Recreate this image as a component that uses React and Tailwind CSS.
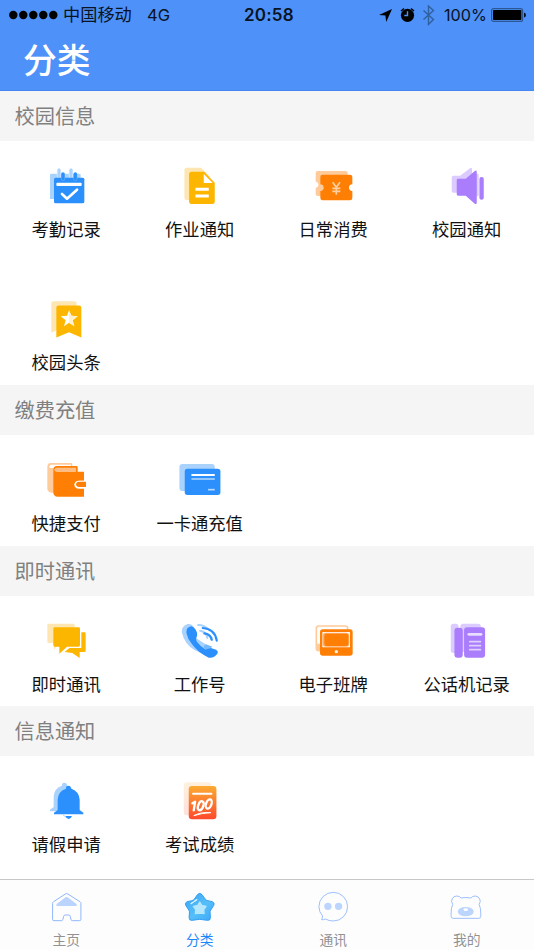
import React from "react";

const BLUE = "#2b90fb";
const LIGHT_BLUE = "#a9d2fd";
const YELLOW = "#fdb600";
const LIGHT_YELLOW = "#fee6b3";
const ORANGE = "#ff7f04";
const LIGHT_ORANGE = "#ffcb9b";
const PURPLE = "#a97dfc";
const LIGHT_PURPLE = "#dccbfe";

function Icon({ box, children }) {
  return (
    <svg viewBox={box} className="h-12 w-12 shrink-0" fill="none">
      {children}
    </svg>
  );
}

const AttendanceIcon = () => (
  <Icon box="128 39 144 144">
    <path d="M153 71h84q4 0 4 4v72h-92V75q0-4 4-4z" fill={LIGHT_BLUE} />
    <path d="M176 61v16M212 61v16" stroke="#e4f1fe" strokeWidth="13" strokeLinecap="round" />
    <path d="M176 60v19M212 60v19" stroke={LIGHT_BLUE} strokeWidth="9" strokeLinecap="round" />
    <rect x="161" y="83" width="91" height="77" rx="5" fill={BLUE} />
    <path d="M188 73v14M225 73v14" stroke="#6fb3fb" strokeWidth="12" strokeLinecap="round" />
    <path d="M188 72v15M225 72v15" stroke={BLUE} strokeWidth="9" strokeLinecap="round" />
    <rect x="168" y="98" width="76" height="10" rx="3" fill="#fff" />
    <path d="M185 132l15 14 30-27" stroke="#fff" strokeWidth="8" strokeLinecap="round" strokeLinejoin="round" />
  </Icon>
);

const HomeworkIcon = () => (
  <Icon box="528.75 39 144 144">
    <path d="M560 53h44l26 26v71h-70q-6 0-6-6V59q0-6 6-6z" fill={LIGHT_YELLOW} />
    <path d="M575 65h38l32 33v57q0 7-7 7h-63q-7 0-7-7V72q0-7 7-7z" fill={YELLOW} />
    <path d="M612 72v27h27z" fill="#fff" />
    <path d="M587 118h40M587 138h40" stroke="#fff" strokeWidth="9" />
  </Icon>
);

const SpendingIcon = () => (
  <Icon box="128 39 144 144">
    <path d="M151 63h84q6 0 6 6v69h-90q-6 0-6-6v-19q8-1 8-9t-8-9V69q0-6 6-6z" fill={LIGHT_ORANGE} />
    <path d="M166 74h82q7 0 7 7v22q-10 1-10 10t10 10v21q0 7-7 7h-82q-7 0-7-7v-21q10-1 10-10t-10-10V81q0-7 7-7z" fill={ORANGE} />
    <path d="M196 97l11 15 11-15M207 112v22M195 115h24M195 124h24" stroke="#ffcf9f" strokeWidth="5" />
  </Icon>
);

const SpeakerIcon = () => (
  <Icon box="528.75 39 144 144">
    <path d="M560 77h20l31-23q5-2 5 4v78l-36-8h-20q-5 0-5-5V82q0-5 5-5z" fill={LIGHT_PURPLE} />
    <rect x="626" y="71" width="10" height="68" rx="4" fill={LIGHT_PURPLE} />
    <path d="M574 86h23l27-23q6-4 6 3v92q0 6-6 3l-27-24h-23q-4 0-4-4V90q0-4 4-4z" fill={PURPLE} />
    <rect x="638" y="81" width="13" height="68" rx="6" fill={PURPLE} />
  </Icon>
);

const HeadlineIcon = () => (
  <Icon box="128 19.5 144 144">
    <path d="M160 35h62q7 0 7 7v80l-38-10-38 18V42q0-7 7-7z" fill={LIGHT_YELLOW} />
    <path d="M176 48h60q7 0 7 7v89l-37-16-38 16V55q0-7 8-7z" fill={YELLOW} />
    <path d="M206 62l7 17 19 1-15 12 5 18-16-10-15 10 5-18-15-12 19-1z" fill="#fff" />
    <path d="M206 62l7 17 19 1-15 12 5 18-16-10z" fill="#fff1cc" />
  </Icon>
);

const WalletIcon = () => (
  <Icon box="128 21 144 144">
    <path d="M151 39h61q4 0 4 4v85h-63q-12-1-12-13V50q0-10 10-11z" fill={LIGHT_ORANGE} />
    <path d="M148 54q-3-9 6-10h58v10z" fill="#fff" />
    <path d="M170 48h58q4 0 4 4v13h19v27h-15q-13 1-14 12 1 11 14 12h15v24h-79q-12-1-13-12V59q0-10 11-11z" fill={ORANGE} />
    <path d="M170 66q-8-1-8-7t8-6h57v13z" fill="#ffbd82" />
    <path d="M258 92h-22q-12 1-13 11 1 10 13 11h22z" fill="#fff" />
    <path d="M257 95h-21q-9 1-9 8t9 8h21z" fill={ORANGE} />
  </Icon>
);

const CardIcon = () => (
  <Icon box="528.75 21 144 144">
    <rect x="539" y="42" width="106" height="81" rx="9" fill={LIGHT_BLUE} />
    <rect x="555" y="56" width="107" height="79" rx="8" fill={BLUE} />
    <path d="M575 75h70" stroke="#fff" strokeWidth="6" />
    <path d="M575 87h70" stroke="#a9d2fd" strokeWidth="5" />
    <path d="M625 119h20" stroke="#b9dafd" strokeWidth="5" />
  </Icon>
);

const ChatIcon = () => (
  <Icon box="128 24 144 144">
    <path d="M145 41h74q4 0 4 4v54h-46l-16 20V99h-16q-4 0-4-4V45q0-4 4-4z" fill={LIGHT_YELLOW} />
    <path d="M243 67h9q4 0 4 4v51q0 4-4 4h-14v18l-22-15-23-3 14-12h36z" fill={YELLOW} />
    <path d="M163 52h72q4 0 4 4v49q0 5-4 5h-35l-23 21v-21h-14q-4 0-4-5V56q0-4 4-4z" fill={YELLOW} />
  </Icon>
);

const PhoneIcon = () => (
  <Icon box="528.75 24 144 144">
    <path d="M564 42q-19 6-18 24 8 36 38 54l24 11 14-25-30-20-15-15 7-17q-8-14-20-12z" fill={LIGHT_BLUE} />
    <path d="M595 45q20 0 34 16" stroke={LIGHT_BLUE} strokeWidth="6" strokeLinecap="round" />
    <path d="M601 62q18 2 22 22" stroke={LIGHT_BLUE} strokeWidth="6" strokeLinecap="round" />
    <path d="M575 49q-17 2-15 20 3 17 17 34 20 27 50 40 18 2 27-14 2-6-5-10l-18-6q-7-2-15 5-14-9-24-22-6-9 0-18 1-12-4-19-5-8-13-10z" fill={BLUE} />
    <path d="M611 109l8-6 19 7-6 5-16 4z" fill="#75b8fb" />
    <path d="M609 54q37 3 42 38" stroke={BLUE} strokeWidth="6.5" strokeLinecap="round" />
    <path d="M614 70q18 2 22 19" stroke={BLUE} strokeWidth="7" strokeLinecap="round" />
  </Icon>
);

const BoardIcon = () => (
  <Icon box="128 24 144 144">
    <rect x="147" y="48" width="94" height="74" rx="7" stroke={LIGHT_ORANGE} strokeWidth="5" />
    <path d="M147 101h16v22h-11q-5 0-5-5z" fill={LIGHT_ORANGE} />
    <rect x="158" y="58" width="98" height="79" rx="8" fill={ORANGE} />
    <rect x="165" y="66" width="83" height="46" rx="2" fill="#fff" />
    <rect x="166" y="68" width="80" height="42" rx="9" fill="#ffad67" />
    <rect x="171" y="71" width="72" height="37" rx="7" fill={ORANGE} />
    <circle cx="207" cy="125" r="5" fill="#fff1e2" />
  </Icon>
);

const DeskPhoneIcon = () => (
  <Icon box="528.75 24 144 144">
    <rect x="552" y="41" width="23" height="88" rx="8" fill={LIGHT_PURPLE} />
    <rect x="581" y="41" width="61" height="85" rx="8" fill={LIGHT_PURPLE} />
    <rect x="563" y="53" width="25" height="90" rx="9" fill={PURPLE} />
    <rect x="592" y="52" width="63" height="91" rx="9" fill={PURPLE} />
    <path d="M606 73h37" stroke="#e8dcff" strokeWidth="8" strokeLinecap="round" />
    <path d="M609 95h32M609 107h32M609 119h32" stroke="#e0d0fe" strokeWidth="5" strokeLinecap="round" />
  </Icon>
);

const BELL = "M197 236q-1-9 7-9t8 9q24 7 26 33v31l11 8v5h-88v-5l11-8v-31q2-26 25-33z";
const BellIcon = () => (
  <Icon box="128 204 144 144">
    <path d={BELL} transform="translate(-12 -9)" fill={LIGHT_BLUE} />
    <path d={BELL} fill={BLUE} />
    <path d="M188 314l8 7" stroke={LIGHT_BLUE} strokeWidth="3" />
    <path d="M195 318h20q-3 9-10 9t-10-9z" fill={BLUE} />
  </Icon>
);

const ScoreIcon = () => (
  <Icon box="528.75 204 144 144">
    <defs>
      <linearGradient id="score" x1="0" y1="0" x2="0" y2="1">
        <stop offset="0" stopColor="#fbab31" />
        <stop offset="1" stopColor="#fd492d" />
      </linearGradient>
    </defs>
    <rect x="552" y="217" width="82" height="99" rx="9" fill="url(#score)" opacity=".17" />
    <rect x="567" y="228" width="83" height="100" rx="10" fill="url(#score)" />
    <path d="M580 251h55" stroke="#fff" strokeWidth="6" strokeLinecap="round" />
    <path d="M578 280l8-5-4 26" stroke="#fff" strokeWidth="7" strokeLinecap="round" strokeLinejoin="round" />
    <ellipse cx="603" cy="287" rx="7.5" ry="14" transform="rotate(20 603 287)" stroke="#fff" strokeWidth="7" />
    <ellipse cx="627" cy="282" rx="8" ry="14.5" transform="rotate(20 627 282)" stroke="#fff" strokeWidth="7" />
    <path d="M582 317q22-12 51-9-26 1-51 9z" stroke="#fff" strokeWidth="3" strokeLinejoin="round" />
  </Icon>
);

const sections = [
  {
    title: "校园信息",
    height: "h-[244.5px]",
    items: [
      ["考勤记录", AttendanceIcon],
      ["作业通知", HomeworkIcon],
      ["日常消费", SpendingIcon],
      ["校园通知", SpeakerIcon],
      ["校园头条", HeadlineIcon],
    ],
  },
  {
    title: "缴费充值",
    height: "h-[111px]",
    items: [
      ["快捷支付", WalletIcon],
      ["一卡通充值", CardIcon],
    ],
  },
  {
    title: "即时通讯",
    height: "h-[110.5px]",
    items: [
      ["即时通讯", ChatIcon],
      ["工作号", PhoneIcon],
      ["电子班牌", BoardIcon],
      ["公话机记录", DeskPhoneIcon],
    ],
  },
  {
    title: "信息通知",
    height: "h-[123px]",
    items: [
      ["请假申请", BellIcon],
      ["考试成绩", ScoreIcon],
    ],
  },
];

function NavIcon({ box, children }) {
  return (
    <svg viewBox={box} className="h-9 w-9" fill="none">
      {children}
    </svg>
  );
}

const HomeNav = () => (
  <NavIcon box="146.25 57 108 108">
    <path d="M195 72q4-3 8 0l36 23q3 2 3 5v48q0 4-4 4h-22q-3 0-4-4l-2-9q-1-4-5-4h-10q-4 0-5 4l-2 9q-1 4-4 4h-23q-4 0-4-4v-48q0-3 3-5z" stroke="#91b7fb" strokeWidth="3" />
    <path d="M196 82q3-2 6 0l26 19q5 6-2 7h-54q-7-1-2-7z" fill="#bbd4fd" />
  </NavIcon>
);

const STAR =
  "M593 74q7-8 14 0l9 13q3 4 8 5l14 3q8 4 4 11l-9 14q-3 4-2 9l1 14q0 9-9 8l-15-2q-8-2-16 0l-15 2q-9 1-9-8l1-14q1-5-2-9l-9-14q-4-7 4-11l14-3q5-1 8-5z";
const StarNav = () => (
  <NavIcon box="546.75 57 108 108">
    <defs>
      <linearGradient id="star" x1="0" y1="0" x2="1" y2="1">
        <stop offset="0" stopColor="#3aa4f5" />
        <stop offset=".55" stopColor="#56bff9" />
        <stop offset="1" stopColor="#3ba8f7" />
      </linearGradient>
    </defs>
    <path d={STAR} fill="url(#star)" stroke="#359df3" strokeWidth="3" />
    <path d="M600 96l6 10 13 3-7 10 1 12-13-2-13 2 1-12-7-10 13-3z" fill="#b4e6fd" stroke="#b4e6fd" strokeWidth="4" strokeLinejoin="round" />
    <path d="M574 101l7-5M584 94l7-5" stroke="#d8f3ff" strokeWidth="4" strokeLinecap="round" />
  </NavIcon>
);

const MessageNav = () => (
  <NavIcon box="146.25 57 108 108">
    <path d="M166 138q-11-12-11-28a43 43 0 1 1 43 43q-13 0-23-6-6 3-12 2 3-5 3-11z" stroke="#9dc0fb" strokeWidth="3" strokeLinejoin="round" />
    <circle cx="182" cy="109" r="11" fill="#bbd5fd" />
    <circle cx="214" cy="109" r="11" fill="#bbd5fd" />
  </NavIcon>
);

const BearNav = () => (
  <NavIcon box="546.75 57 108 108">
    <path d="M558 103q-6-8-2-16 4-9 14-9 9 0 13 6 14-3 29 0 5-6 14-6 9 1 13 9 4 8-2 16 5 10 5 26v10q0 6-6 6h-77q-6 0-6-6v-10q0-16 5-26z" stroke="#9dc0fb" strokeWidth="3" />
    <ellipse cx="597" cy="125" rx="24" ry="14" fill="#bbd5fd" />
    <ellipse cx="597" cy="119" rx="7" ry="4" fill="#fff" />
  </NavIcon>
);

const tabs = [
  ["主页", HomeNav],
  ["分类", StarNav, true],
  ["通讯", MessageNav],
  ["我的", BearNav],
];

function StatusBar() {
  return (
    <div className="flex h-[30px] items-center font-['Inter','Noto_Sans_CJK_SC',sans-serif] text-[17px] leading-[30px] text-[#0a1322]">
      <div className="flex w-[244px] items-center pl-[9px]">
        <svg viewBox="0 0 50 10" className="h-[10px] w-[50px]">
          {[4.3, 14.3, 24.3, 34.3, 44.3].map((x) => (
            <circle key={x} cx={x} cy="5" r="4.2" fill="#000" />
          ))}
        </svg>
        <span className="ml-[4px] w-[84px] text-[17.2px]">中国移动</span>
        <span className="text-[16.5px]">4G</span>
      </div>
      <span className="w-[134px] text-[17px] font-semibold tracking-[0.2px]">20:58</span>
      <svg viewBox="0 0 60 24" className="h-6 w-[60px]" fill="none">
        <path d="M14 6L8.2 19l-.8-6.6L1 12z" fill="#000" />
        <circle cx="29.5" cy="12.3" r="6.6" fill="#000" />
        <path d="M23 8l3-2.5M36 8l-3-2.5" stroke="#000" strokeWidth="1.4" />
        <path d="M29.5 8.2v4.3h-3.2" stroke="#4e91f9" strokeWidth="1.4" />
        <path d="M45.5 7.5l10 9-5 4.8V3l5 4.6-10 9" stroke="#2f609f" strokeWidth="1.4" />
      </svg>
      <span className="ml-[6px] w-[47px] text-[16.2px]">100%</span>
      <svg viewBox="0 0 36 14" className="h-[14px] w-9">
        <rect x=".6" y=".6" width="31" height="12.8" rx="2" fill="none" stroke="#2b5894" strokeWidth="1.2" />
        <rect x="2" y="2" width="28.4" height="10" rx=".7" fill="#000" />
        <path d="M33 4.5q2 .5 2 2.5t-2 2.5z" fill="#081424" />
      </svg>
    </div>
  );
}

export default function App() {
  return (
    <div className="flex h-[950px] w-[534px] flex-col overflow-hidden bg-white font-['Noto_Sans_CJK_SC',sans-serif]">
      <header className="h-[91px] shrink-0 border-b border-[#4288f0] bg-[#4e91f9]">
        <StatusBar />
        <h1 className="pl-[23px] text-[33.8px] leading-[57px] font-medium text-white">分类</h1>
      </header>

      <main className="shrink-0">
        {sections.map((section) => (
          <section key={section.title}>
            <h2 className="h-[49.8px] bg-[#f5f5f5] pl-[14.5px] text-[20.2px] leading-[50px] text-[#808080]">
              {section.title}
            </h2>
            <div className={`grid grid-cols-4 content-start ${section.height}`}>
              {section.items.map(([label, Drawing]) => (
                <div key={label} className="flex h-[133.5px] flex-col items-center pt-[22px]">
                  <Drawing />
                  <span className="mt-[5px] pr-[1.2px] text-[17.3px] leading-[26px] whitespace-nowrap text-[#111]">
                    {label}
                  </span>
                </div>
              ))}
            </div>
          </section>
        ))}
      </main>

      <nav className="grid min-h-0 flex-1 grid-cols-4 border-t border-[#c8c8ca] bg-[#fdfdfd]">
        {tabs.map(([label, Drawing, active]) => (
          <div key={label} className="flex flex-col items-center pt-[9px]">
            <Drawing />
            <span
              className={`mt-[4px] pr-[1px] text-[13.8px] leading-5 ${active ? "text-[#1c86fb]" : "text-[#929292]"}`}
            >
              {label}
            </span>
          </div>
        ))}
      </nav>
    </div>
  );
}
